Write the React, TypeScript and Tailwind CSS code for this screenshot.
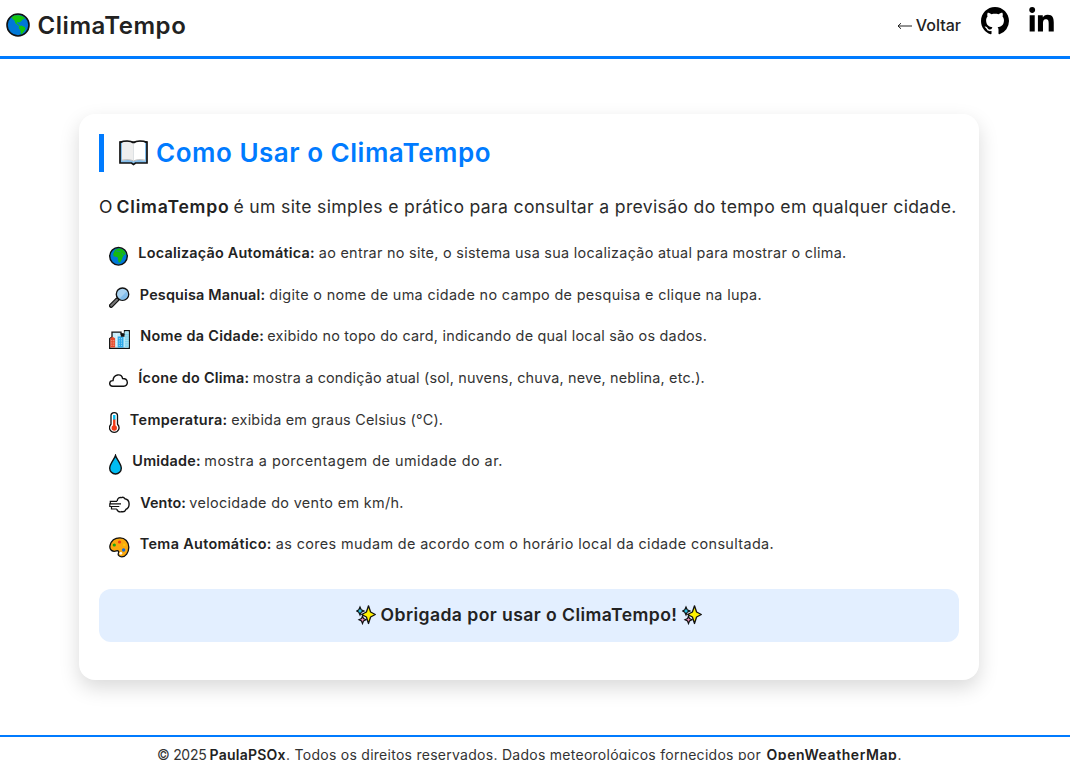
import type { ReactNode } from "react";
import { BsGithub } from "react-icons/bs";
import { FaLinkedinIn } from "react-icons/fa";

function GlobeAmericas() {
  return (
    <svg width="24" height="24" viewBox="0 0 24 24" className="shrink-0">
      <circle cx="12" cy="12" r="11" fill="#0078d7" stroke="#111" strokeWidth="1.6" />
      <path d="M5.400 4.600 8 2.600l5-.4 4 1.200 2.200 2-2.600 1.200-1.600 2-2.600.8-1.600-.5.4 1.800 1.800.8 1 1.400-1.800-.5-2.800-2.200-.9-2.600L7 6.200Z" fill="#16c60c" />
      <path d="m13 13.200 2.400-.8 3.200 1.600 1 1.600-1.300 2.400-2 2.400-1.300 1.200-.4-2.600-.4-2-1.500-1.800Z" fill="#16c60c" />
    </svg>
  );
}

function GlobeAfrica() {
  return (
    <svg width="19" height="21" viewBox="0 0 19 21" className="shrink-0">
      <circle cx="9.500" cy="10.300" r="8.800" fill="#0078d7" stroke="#111" strokeWidth="1.400" />
      <path d="m5.500 5 1.200-1.500 3.500-1.300 3.500 1.200 2.300 2.300.8 2.600-1.500.4-1.600 2.200-.8 2.600-1.700 2.700-1.500.2-.7-2.600-.2-2.400-1.600-.7-2.400-.2-.7-2.300Z" fill="#16b910" />
      <path d="m7 5 2.500.4 2 .5M13 7l1.300 2" stroke="#0078d7" strokeWidth=".6" fill="none" />
    </svg>
  );
}

function Magnifier() {
  return (
    <svg width="20.500" height="21" viewBox="0 0 20.500 21" className="shrink-0">
      <path d="m8.300 12.500-6.200 6.200" stroke="#111" strokeWidth="4.400" strokeLinecap="round" />
      <path d="m8 12.800-5.700 5.700" stroke="#767676" strokeWidth="2.200" strokeLinecap="round" />
      <circle cx="13.500" cy="7.200" r="6.200" fill="#a9d3f2" stroke="#111" strokeWidth="1.400" />
      <path d="M17.600 4.400a5 5 0 0 1-7 7Z" fill="#83beec" />
    </svg>
  );
}

function City() {
  return (
    <svg width="21" height="21" viewBox="0 0 21 21" className="shrink-0">
      <path d="M.7 19.300V9.500L3 8V3.200h9V5h3.500V1.700h4.800v17.600Z" fill="#c8edfa" stroke="#111" strokeWidth="1.300" />
      <path d="M15.500 2.500h4.200v16h-4.200z" fill="#a7e3f5" />
      <path d="M8.700 7.500h5.800v11H8.700z" fill="#2ba7e8" />
      <path d="M1.300 9.200 3.500 7.700l2.600 1.500v9.300H1.300z" fill="#e74827" />
      <path d="M12.500 4.500V7h2.300v-2" stroke="#111" strokeWidth="1.400" fill="#111" />
      <path d="M2.800 11v6M4.800 11v6M10.300 9v8M12.600 9v8M7.500 5v12" stroke="#fff" strokeWidth=".7" strokeDasharray="1.300 1" opacity=".75" />
      <path d="M17 5v13M19 5v13" stroke="#4eb9e2" strokeWidth=".8" strokeDasharray="1.300 1" />
    </svg>
  );
}

function Cloud() {
  return (
    <svg width="19" height="21" viewBox="0 0 19 21" className="shrink-0">
      <path d="M3.700 16.200C-.4 16-.3 10.500 4 10.600 4.500 4 12.400 3 13.600 8.500c6.200 0 6 7.700 1.100 7.700Z" fill="#fff" stroke="#111" strokeWidth="1.400" />
    </svg>
  );
}

function Thermometer() {
  return (
    <svg width="10.500" height="21" viewBox="0 0 10.500 21" className="shrink-0">
      <path d="M2 12.300V3.600C2-.3 8.500-.3 8.500 3.600v8.700C12 16 8.800 20.300 5.250 20.300S-1.500 16 2 12.300Z" fill="#fff" stroke="#111" strokeWidth="1.300" />
      <path d="M5.250 3v5" stroke="#00bcf2" strokeWidth="2.400" />
      <path d="M5.250 7.500v9" stroke="#f03a17" strokeWidth="2.400" />
      <circle cx="5.250" cy="16" r="2.700" fill="#f03a17" />
    </svg>
  );
}

function Drop() {
  return (
    <svg width="13" height="21" viewBox="0 0 13 21" className="shrink-0">
      <path d="M6.500 1.500C5.500 5 .7 9.500.7 14.200a5.800 5.800 0 0 0 11.600 0C12.300 9.500 7.500 5 6.500 1.500Z" fill="#00bcf2" stroke="#111" strokeWidth="1.400" />
    </svg>
  );
}

function Wind() {
  return (
    <svg width="21" height="21" viewBox="0 0 21 21" className="shrink-0">
      <path d="M8.200 6C8.400 3.200 10.400 2 12.500 2.600c1-.5 2.500-.2 3.300 1.100 2.800.4 4.300 2.600 4.300 5.300 0 2.500-1.200 4.600-3.200 5.400-.8 2-2.500 2.800-4.400 2.200-2.400.8-4.400-.5-4.700-2.600" fill="#fff" stroke="#111" strokeWidth="1.400" />
      <path d="M8.200 6.300H1.300V9h9.500M12 8.900H.8v2.600h9.500M7.400 11.500H2.500V14h5.300" fill="#fff" stroke="#111" strokeWidth="1.200" />
    </svg>
  );
}

function Palette() {
  return (
    <svg width="20.500" height="21" viewBox="0 0 20.500 21" className="shrink-0">
      <path d="M1 8.500C2.200 3.300 6.500.8 11 .8c5 0 8.800 4 8.800 9.500 0 5.300-3.300 9.500-7 9.500-2.600 0-4.200-1.800-3.400-3.600.8-1.700-.2-2.900-2-2.300C3.600 15.200 0 13 1 8.500Z" fill="#faa80f" stroke="#111" strokeWidth="1.300" />
      <circle cx="5.300" cy="8" r="1.600" fill="#16a813" />
      <circle cx="10.500" cy="5" r="1.600" fill="#f03a17" />
      <circle cx="15.300" cy="7.900" r="1.300" fill="#fcc50a" />
      <circle cx="14.600" cy="13" r="1.700" fill="#1267d8" />
      <circle cx="11.800" cy="16.300" r="1.400" fill="#fff" />
    </svg>
  );
}

function Book() {
  return (
    <svg width="29" height="26" viewBox="0 0 29 26" className="shrink-0">
      <path d="M1 2h27v21H16.500l-2 1.500-2-1.500H1Z" fill="#83beec" stroke="#111" strokeWidth="1.700" />
      <path d="M3 2.500c4-1.300 8.500-1.300 11.500.7v18.300c-3-1.700-7.500-1.700-11.500-.8Z" fill="#eee" />
      <path d="M14.500 3.200c3-2 7.500-2 11.500-.7v18.200c-4-.9-8.500-.9-11.500.8Z" fill="#fff" />
      <path d="M3 20.200c4-.8 8.500-.8 11.500.8 3-1.600 7.500-1.600 11.500-.8" fill="none" stroke="#b9b9b9" strokeWidth="1" />
      <path d="M1 2.200c4.500-1.600 10.500-1.700 13.500.8 3-2.500 9-2.400 13.500-.8" fill="none" stroke="#111" strokeWidth="1.500" />
      <path d="M14.500 3v18" stroke="#ddd" strokeWidth=".7" />
    </svg>
  );
}

function Sparkles() {
  return (
    <svg width="20" height="20" viewBox="0 0 20 20" className="shrink-0">
      <path d="m4 2 1.200 2.800L8 6 5.200 7.200 4 10 2.800 7.200.6 6l2.200-1.200Z" fill="#31d2f7" stroke="#111" strokeWidth="1.200" />
      <path d="m6.500 11 1 2.600 2.500 1.200L7.500 16l-1 2.600-1-2.600L3 14.800l2.500-1.200Z" fill="#ee8fb8" stroke="#111" strokeWidth="1.200" />
      <path d="m12.500.8 2.100 6.200 4.700 2.500-4.700 2.500-2.100 6.500-2.100-6.500-4.700-2.500 4.700-2.500Z" fill="#fff100" stroke="#111" strokeWidth="1.300" strokeLinejoin="round" />
    </svg>
  );
}

type Item = { icon: ReactNode; label: string; labelClass: string; text: string; textClass: string };

const items: Item[] = [
  { icon: <GlobeAfrica />, label: "Localização Automática:", labelClass: "w-[180.500px] tracking-[0.23px]", text: "ao entrar no site, o sistema usa sua localização atual para mostrar o clima.", textClass: "tracking-[0.29px]" },
  { icon: <Magnifier />, label: "Pesquisa Manual:", labelClass: "w-[129.500px] tracking-[0.17px]", text: "digite o nome de uma cidade no campo de pesquisa e clique na lupa.", textClass: "tracking-[0.34px]" },
  { icon: <City />, label: "Nome da Cidade:", labelClass: "w-[127px] tracking-[0.3px]", text: "exibido no topo do card, indicando de qual local são os dados.", textClass: "tracking-[0.24px]" },
  { icon: <Cloud />, label: "Ícone do Clima:", labelClass: "w-[114.500px] tracking-[0.25px]", text: "mostra a condição atual (sol, nuvens, chuva, neve, neblina, etc.).", textClass: "tracking-[0.18px]" },
  { icon: <Thermometer />, label: "Temperatura:", labelClass: "w-[101.500px] tracking-[0.35px]", text: "exibida em graus Celsius (°C).", textClass: "tracking-[0.22px]" },
  { icon: <Drop />, label: "Umidade:", labelClass: "w-[72px] tracking-[0.25px]", text: "mostra a porcentagem de umidade do ar.", textClass: "tracking-[0.49px]" },
  { icon: <Wind />, label: "Vento:", labelClass: "w-[49px] tracking-[0.05px]", text: "velocidade do vento em km/h.", textClass: "tracking-[0.34px]" },
  { icon: <Palette />, label: "Tema Automático:", labelClass: "w-[136px] tracking-[0.34px]", text: "as cores mudam de acordo com o horário local da cidade consultada.", textClass: "tracking-[0.37px]" },
];

export default function App() {
  return (
    <div className="flex h-[760px] flex-col overflow-hidden whitespace-nowrap bg-white font-['Inter',sans-serif] text-[#222]">
      <header className="flex h-[59px] shrink-0 items-start justify-between border-b-[3px] border-[#007bff] pl-1.5 pr-[16px]">
        <div className="flex pt-[13px]">
          <GlobeAmericas />
          <h1 className="ml-[7.500px] pt-px text-[24px] font-semibold leading-[23px] tracking-[0.55px]">ClimaTempo</h1>
        </div>
        <nav className="flex items-start">
          <a href="#" className="mt-[12.500px] flex h-6 items-center text-[16px] font-medium leading-6">
            <svg width="15" height="8" viewBox="0 0 15 8" className="mr-1 mt-[3px] fill-none stroke-[#222]">
              <path d="M15 4H1M4 1.200 1 4l3 2.800" strokeWidth="1" />
            </svg>
            Voltar
          </a>
          <BsGithub className="ml-5 mt-[7px] text-black" size={28} />
          <FaLinkedinIn className="ml-[20px] mt-[6.500px] h-[28px] w-[25px] text-black" />
        </nav>
      </header>

      <main className="ml-[79px] mt-[55px] h-[566px] w-[900px] shrink-0 rounded-2xl bg-white px-5 pt-5 shadow-[0_8px_20px_rgba(0,0,0,0.15)]">
        <h2 className="flex h-[38px] items-center border-l-[5px] border-[#007bff] pl-[14.500px] text-[26px] font-semibold leading-[35px] tracking-[0.52px] text-[#007bff]">
          <Book />
          <span className="ml-[8.500px] pb-[1px]">Como Usar o ClimaTempo</span>
        </h2>
        <p className="mt-5 flex h-[28px] pt-[0.500px] text-[17.600px] leading-[28px]">
          <span className="w-[17.500px]">O</span>
          <strong className="w-[117px] font-semibold tracking-[0.8px]">ClimaTempo</strong>
          <span className="tracking-[0.33px] text-[#2b2b2b]">é um site simples e prático para consultar a previsão do tempo em qualquer cidade.</span>
        </p>
        <ul className="mt-[23.200px] pl-[10px]">
          {items.map(({ icon, label, labelClass, text, textClass }) => (
            <li key={label} className="flex h-[41.600px] items-start text-[14.400px] leading-5">
              <span className="mr-[10.300px] mt-[2.500px] shrink-0">{icon}</span>
              <strong className={`shrink-0 font-semibold ${labelClass}`}>{label}</strong>
              <span className={`text-[#333] ${textClass}`}>{text}</span>
            </li>
          ))}
        </ul>
        <div className="mt-[13px] flex h-[53px] items-center justify-center rounded-xl bg-[#e3efff] text-[17.600px] font-semibold leading-6">
          <Sparkles />
          <span className="ml-[5px] mr-[5px] tracking-[0.42px]">Obrigada por usar o ClimaTempo!</span>
          <Sparkles />
        </div>
      </main>

      <footer className="mt-[55px] flex h-10 shrink-0 border-t-2 border-[#007bff] pl-[157px] pt-[8px] text-[14px] leading-5 text-[#333]">
        <span className="w-[52.500px] tracking-[-0.3px]">© 2025</span>
        <strong className="w-[76.500px] font-semibold tracking-[0.24px] text-[#222]">PaulaPSOx</strong>
        <span className="w-[480.500px] tracking-[0.27px]">. Todos os direitos reservados. Dados meteorológicos fornecidos por</span>
        <strong className="font-semibold tracking-[0.57px] text-[#222]">OpenWeatherMap</strong>
        <span>.</span>
      </footer>
    </div>
  );
}
